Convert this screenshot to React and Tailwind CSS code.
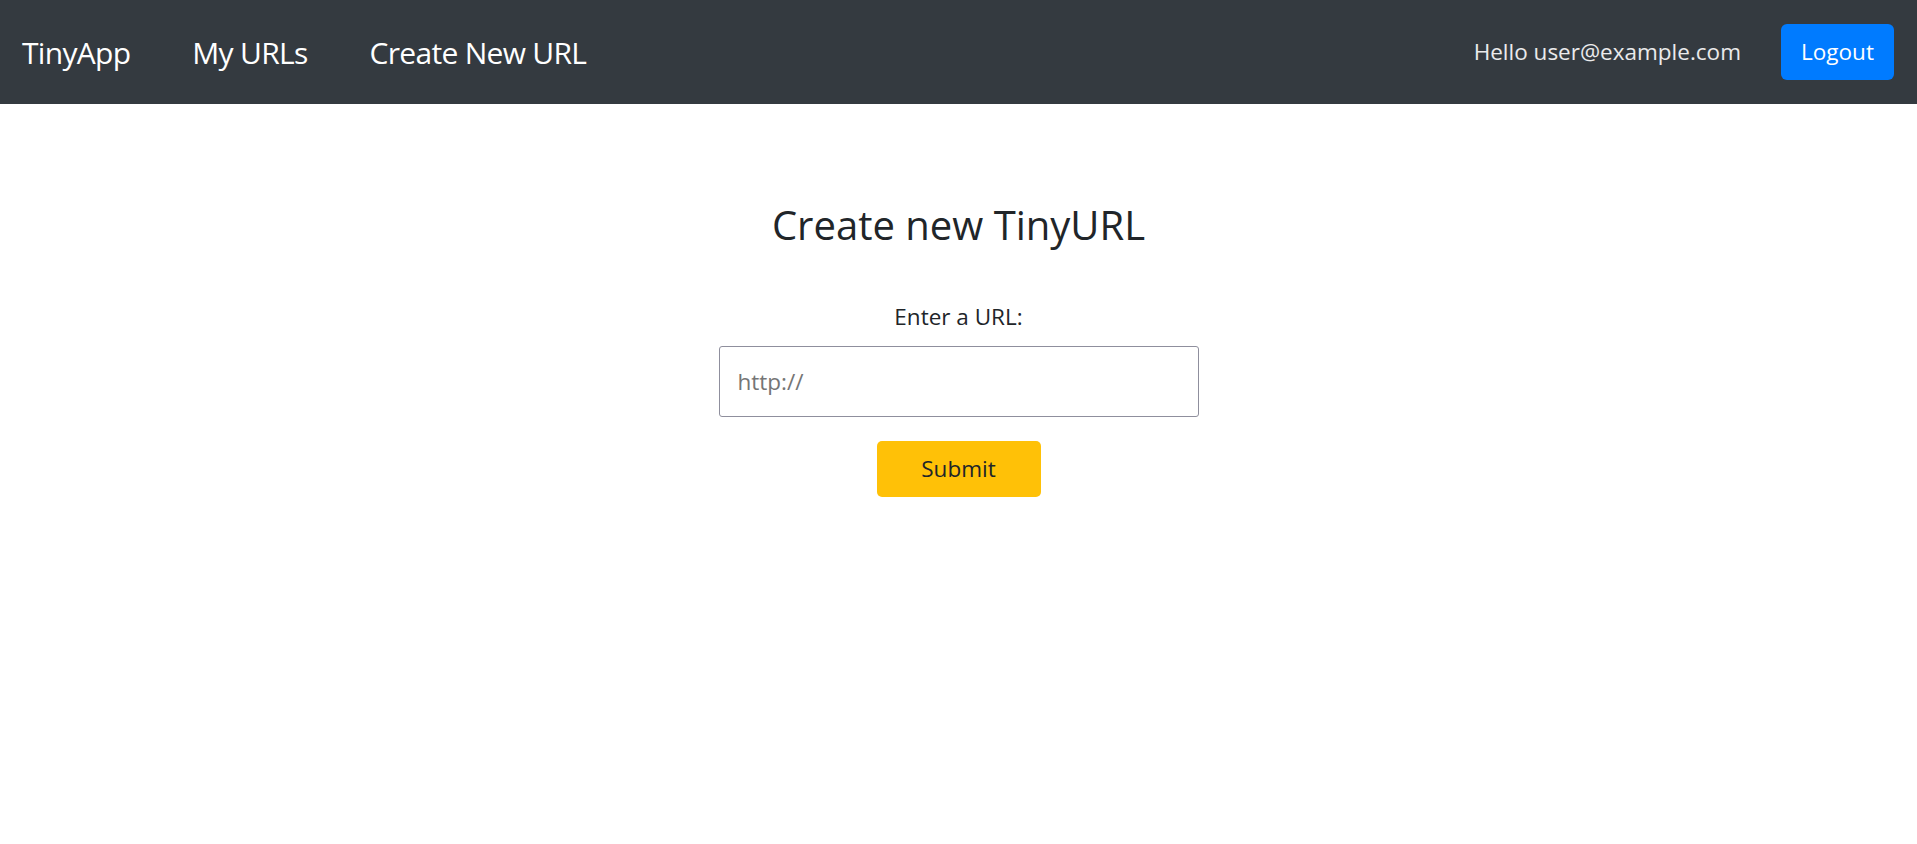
export default function App() {
  return (
    <div className="min-h-screen bg-white font-['Open_Sans',sans-serif] text-[#212529]">
      {/* Navbar */}
      <nav className="flex h-[104px] items-center justify-between bg-[#343a40] pl-[22px] pr-[23px]">
        <div className="flex items-center gap-[62px] text-[30px] tracking-[-0.7px] text-white">
          <a href="#">TinyApp</a>
          <a href="#">My URLs</a>
          <a href="#">Create New URL</a>
        </div>
        <div className="flex items-center gap-[40px]">
          <span className="text-[22.5px] text-white/90">Hello user@example.com</span>
          <button className="h-[56px] w-[113px] rounded-[6px] bg-[#007bff] text-[22.5px] text-white">
            Logout
          </button>
        </div>
      </nav>

      {/* Main */}
      <main className="flex flex-col items-center">
        <h3 className="mt-[96px] text-[40px] leading-[50px]">Create new TinyURL</h3>
        <form className="flex flex-col items-center" onSubmit={(e) => e.preventDefault()}>
          <label htmlFor="longURL" className="mt-[49px] text-[22.5px] leading-[36px]">
            Enter a URL:
          </label>
          <input
            id="longURL"
            type="text"
            placeholder="http://"
            className="mt-[11px] h-[71px] w-[480px] rounded-[3px] border border-[#8f8f9d] px-[18px] text-[22.5px] placeholder:text-[#757575] outline-none"
          />
          <button
            type="submit"
            className="mt-[24px] h-[56px] w-[164px] rounded-[5px] bg-[#ffc107] text-[22.5px] text-[#212529]"
          >
            Submit
          </button>
        </form>
      </main>
    </div>
  );
}
